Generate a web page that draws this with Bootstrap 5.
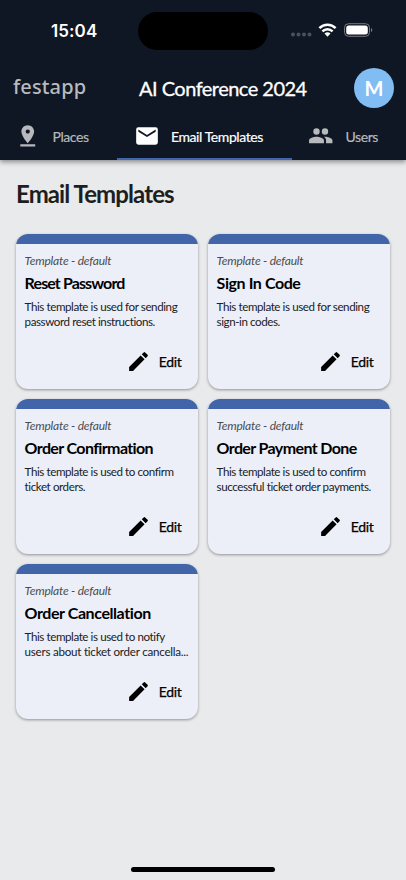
<!DOCTYPE html>
<html lang="en">
<head>
<meta charset="utf-8">
<meta name="viewport" content="width=device-width, initial-scale=1">
<title>Email Templates</title>
<link href="https://cdn.jsdelivr.net/npm/bootstrap@5.3.0/dist/css/bootstrap.min.css" rel="stylesheet">
<style>
body{font-family:Lato,"Open Sans",sans-serif;background:#e9eaec;height:880px;overflow:hidden;color:#000}
svg{display:block;flex:none}
.top{background:#0f1724;height:160px;box-shadow:0 2px 5px rgba(0,0,0,.42);flex:none}
.status{height:62px;padding:12px 33px 0 51px}
.clock{font:600 17px/38px Inter,sans-serif;width:87px;letter-spacing:.1px}
.island{width:130px;height:38px;border-radius:19px;background:#000}
.brandbar{height:52px;padding:0 12px 0 13px}
.logo{font:500 20px/24px "Noto Sans",sans-serif;color:#b9babb;width:126px;letter-spacing:.15px;padding-bottom:3px}
.apptitle{font-size:20px;line-height:24px;width:190px;letter-spacing:-.52px;-webkit-text-stroke:.3px #fff;white-space:nowrap}
.avatar{width:40px;height:40px;background:#81bdf3;font-size:20px;font-weight:700}
.tabs{height:46px}
.tab{font-size:14px;color:#b7b9bd;border-bottom:2px solid transparent;letter-spacing:-.42px;-webkit-text-stroke:.2px;white-space:nowrap}
.tab.on{color:#fff;border-color:#4266ae}
.tab span{padding-top:1px}
.t1{width:117px;padding-left:15px}.t2{width:175px;padding-left:17px}.t3{width:114px;padding-left:16px}
.tab svg{margin-right:12px}
.t2 svg{margin-right:11px}
h1{font-size:24px;font-weight:700;line-height:32px;letter-spacing:-.9px;color:#1d1e20;margin:18px 0 24px}
.tiles{display:grid;grid-template-columns:182px 182px;gap:10px}
.tile{height:155px;background:#eceff7;border:0;border-radius:12px;overflow:hidden;box-shadow:0 1px 3px rgba(0,0,0,.38)}
.strip{height:10px;background:#4265a9;flex:none}
.inner{padding:8px 8.600px 0}
.kind{font-size:12px;line-height:17.500px;font-style:italic;color:#4b4d51;letter-spacing:-.2px}
.name{font-size:16px;line-height:22px;font-weight:700;letter-spacing:-.62px;margin:2px 0 5px;white-space:nowrap}
.name.tight{letter-spacing:-.88px}
.name.loose{letter-spacing:-.42px}
.desc{font-size:11.6px;line-height:15.5px;letter-spacing:-.42px;color:#202124;white-space:nowrap}
.desc .wide{letter-spacing:-.24px}
.edit{font-size:14px;line-height:24px;letter-spacing:-.35px;-webkit-text-stroke:.25px;padding-right:8px;margin-top:19.500px;gap:8px}
.home{width:144px;height:5px;border-radius:3px;background:#000;margin:auto auto 8px 131px}
</style>
<script src="https://cdn.jsdelivr.net/npm/bootstrap@5.3.0/dist/js/bootstrap.bundle.min.js"></script>
</head>
<body class="d-flex flex-column">
<svg width="0" height="0" class="position-absolute"><defs><symbol id="pen" viewBox="0 0 24 24"><path d="M3 17.25V21h3.75L17.81 9.94l-3.75-3.75L3 17.25zM20.71 7.04a1 1 0 0 0 0-1.41l-2.34-2.34a1 1 0 0 0-1.41 0l-1.83 1.83 3.75 3.75 1.83-1.83z"/></symbol></defs></svg>
<header class="top text-white">
  <div class="status d-flex">
    <div class="clock">15:04</div>
    <div class="island"></div>
    <svg width="85" height="38" class="ms-auto" viewBox="0 0 85 38">
      <g fill="#4b515c"><circle cx="5" cy="22.5" r="2"/><circle cx="10.500" cy="22.5" r="2"/><circle cx="16" cy="22.5" r="2"/><circle cx="21.500" cy="22.5" r="2"/></g>
      <g fill="none" stroke="#fff" stroke-width="2.5"><path d="M31.4 16.2a11.2 11.2 0 0 1 16.2 0"/><path d="M34.4 19.3a7.1 7.1 0 0 1 10.2 0"/></g>
      <path d="M36.5 21.5a4.6 4.6 0 0 1 6 0l-3 3.2z" fill="#fff"/>
      <rect x="56.5" y="11.7" width="25" height="12.6" rx="4" fill="none" stroke="#777b82"/>
      <rect x="58.2" y="13.4" width="21.6" height="9.2" rx="2.5" fill="#fff"/>
      <path d="M83 16v4q1.3-.7 1.3-2t-1.3-2z" fill="#777b82"/>
    </svg>
  </div>
  <div class="brandbar d-flex align-items-center">
    <div class="logo">festapp</div>
    <div class="apptitle">AI Conference 2024</div>
    <div class="avatar rounded-circle d-flex align-items-center justify-content-center ms-auto">M</div>
  </div>
  <nav class="tabs d-flex">
    <div class="tab t1 d-flex align-items-center"><svg width="25.5" height="25.5" viewBox="0 0 24 24" fill="currentColor"><path d="M18 8c0-3.31-2.69-6-6-6S6 4.69 6 8c0 4.5 6 11 6 11s6-6.500 6-11zm-8 0a2 2 0 1 1 4 0 2 2 0 0 1-4 0zM5 20v2h14v-2H5z"/></svg><span>Places</span></div>
    <div class="tab t2 on d-flex align-items-center"><svg width="26" height="26" viewBox="0 0 24 24" fill="currentColor"><path d="M20 4H4a2 2 0 0 0-2 2v12a2 2 0 0 0 2 2h16a2 2 0 0 0 2-2V6a2 2 0 0 0-2-2zm0 4-8 5-8-5V6l8 5 8-5v2z"/></svg><span>Email Templates</span></div>
    <div class="tab t3 d-flex align-items-center"><svg width="25.5" height="25.5" viewBox="0 0 24 24" fill="currentColor"><path d="M16 11a3 3 0 1 0 0-6 3 3 0 0 0 0 6zm-8 0a3 3 0 1 0 0-6 3 3 0 0 0 0 6zm0 2c-2.330 0-7 1.170-7 3.500V19h14v-2.500C15 14.170 10.330 13 8 13zm8 0c-.29 0-.62.02-.97.05 1.160.84 1.970 1.970 1.970 3.450V19h6v-2.500c0-2.330-4.670-3.500-7-3.500z"/></svg><span>Users</span></div>
  </nav>
</header>
<main class="px-3">
  <h1>Email Templates</h1>
  <div class="tiles">
    <article class="card tile"><div class="strip"></div><div class="inner"><div class="kind">Template - default</div><div class="name tight">Reset Password</div><div class="desc">This template is used for sending<br>password reset instructions.</div><div class="edit d-flex align-items-center justify-content-end"><svg width="25" height="25"><use href="#pen"/></svg>Edit</div></div></article>
    <article class="card tile"><div class="strip"></div><div class="inner"><div class="kind">Template - default</div><div class="name loose">Sign In Code</div><div class="desc">This template is used for sending<br>sign-in codes.</div><div class="edit d-flex align-items-center justify-content-end"><svg width="25" height="25"><use href="#pen"/></svg>Edit</div></div></article>
    <article class="card tile"><div class="strip"></div><div class="inner"><div class="kind">Template - default</div><div class="name">Order Confirmation</div><div class="desc">This template is used to confirm<br>ticket orders.</div><div class="edit d-flex align-items-center justify-content-end"><svg width="25" height="25"><use href="#pen"/></svg>Edit</div></div></article>
    <article class="card tile"><div class="strip"></div><div class="inner"><div class="kind">Template - default</div><div class="name">Order Payment Done</div><div class="desc">This template is used to confirm<br>successful ticket order payments.</div><div class="edit d-flex align-items-center justify-content-end"><svg width="25" height="25"><use href="#pen"/></svg>Edit</div></div></article>
    <article class="card tile"><div class="strip"></div><div class="inner"><div class="kind">Template - default</div><div class="name loose">Order Cancellation</div><div class="desc">This template is used to notify<br><span class="wide">users about ticket order cancella...</span></div><div class="edit d-flex align-items-center justify-content-end"><svg width="25" height="25"><use href="#pen"/></svg>Edit</div></div></article>
  </div>
</main>
<div class="home"></div>
</body>
</html>
